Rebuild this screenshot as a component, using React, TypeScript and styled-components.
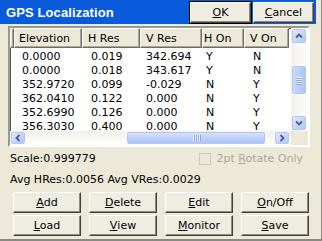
import React from "react";
import styled, { createGlobalStyle } from "styled-components";

const Global = createGlobalStyle`
  html, body { margin: 0; padding: 0; background: #ECE9D8; }
  body { font-family: "DejaVu Sans", "Liberation Sans", sans-serif; font-size: 11px; color: #000; }
  * { box-sizing: border-box; }
`;

const Frame = styled.div`
  width: 322px;
  height: 241px;
  background: #ECE9D8;
  border-right: 1px solid #8C8A7E;
  border-bottom: 2px solid #8C8A7E;
  display: flex;
  flex-direction: column;
  overflow: hidden;
`;

const TitleBar = styled.div`
  width: 316px;
  height: 24px;
  flex: none;
  background: #0A5BDC;
  display: flex;
  align-items: center;
  padding: 0 2px 0 6px;
  gap: 2px;
`;

const Title = styled.div`
  flex: 1;
  color: #fff;
  font-family: "Liberation Sans", Arial, sans-serif;
  font-weight: bold;
  font-size: 13px;
  letter-spacing: 0.1px;
  padding-top: 1px;
`;

const Btn = styled.button<{ $def?: boolean; $w?: number }>`
  width: ${(p) => (p.$w ? `${p.$w}px` : "100%")};
  height: 21px;
  margin: 0;
  padding: 0;
  font-family: "DejaVu Sans", sans-serif;
  font-size: 11px;
  color: #000;
  background: #EFEDE2;
  border: 1px solid;
  border-color: #fff #404040 #404040 #fff;
  box-shadow: inset -1px -1px 0 #8C8A7E;
  outline: ${(p) => (p.$def ? "1px solid #000" : "none")};
  outline-offset: 0;
  display: flex;
  align-items: center;
  justify-content: center;
  u { text-decoration: underline; text-underline-offset: 1px; }
`;

const Body = styled.div`
  display: flex;
  flex-direction: column;
  padding: 2px 0 0 8px;
`;

const ListView = styled.div`
  width: 302px;
  height: 121px;
  border: 2px solid;
  border-color: #9A988C #fff #fff #9A988C;
  box-shadow: inset 1px 1px 0 #5A5850;
  background: #fff;
  display: grid;
  grid-template-columns: 281px 17px;
  grid-template-rows: 103px 14px;
`;

const Table = styled.div`
  overflow: hidden;
  display: flex;
  flex-direction: column;
  padding-top: 0;
`;

const HeadRow = styled.div`
  display: grid;
  grid-template-columns: 4px 68px 58px 62px 42px 45px;
  height: 20px;
  flex: none;
`;

const HeadCell = styled.div<{ $pad: number }>`
  background: #ECE9D8;
  border-top: 1px solid #fff;
  border-left: 1px solid #fff;
  border-right: 1px solid #6E6C62;
  border-bottom: 1px solid #6E6C62;
  box-shadow: inset -1px -1px 0 #ACA899;
  padding-left: ${(p) => p.$pad - 1}px;
  display: flex;
  align-items: center;
  white-space: nowrap;
  font-size: 11px;
`;

const Rows = styled.div`
  padding-top: 2px;
  display: flex;
  flex-direction: column;
`;

const Row = styled.div`
  display: grid;
  grid-template-columns: 72px 58px 62px 42px 45px;
  height: 14px;
  flex: none;
  align-items: center;
`;

const Cell = styled.div<{ $pad: number }>`
  padding-left: ${(p) => p.$pad}px;
  white-space: nowrap;
  line-height: 14px;
`;

const VScroll = styled.div`
  background: linear-gradient(90deg, #F3F1EC, #FEFEFB);
  display: flex;
  flex-direction: column;
  justify-content: space-between;
  padding: 1px 2px 1px 1px;
  position: relative;
`;

const HScroll = styled.div`
  background: linear-gradient(180deg, #F3F1EC, #FEFEFB);
  display: flex;
  align-items: center;
  justify-content: space-between;
  padding: 1px 2px 1px 1px;
  position: relative;
`;

const Corner = styled.div`
  background: #ECE9D8;
`;

const ArrowBtn = styled.div`
  width: 14px;
  height: 14px;
  flex: none;
  border-radius: 2px;
  border: 1px solid #B4C6F2;
  background: linear-gradient(135deg, #E0E8FE 0%, #C4D4FB 60%, #B4C8F6 100%);
  display: flex;
  align-items: center;
  justify-content: center;
`;

const HArrowBtn = styled(ArrowBtn)`
  height: 12px;
`;

const VThumb = styled.div`
  position: absolute;
  left: 1px;
  top: 38px;
  width: 14px;
  height: 28px;
  border-radius: 2px;
  border: 1px solid #B4C6F2;
  background: linear-gradient(90deg, #C9D8FC, #BACDF8 60%, #B0C4F4);
  display: flex;
  flex-direction: column;
  align-items: center;
  justify-content: center;
  gap: 1px;
`;

const HThumb = styled.div`
  position: absolute;
  left: 117px;
  top: 1px;
  width: 138px;
  height: 12px;
  border-radius: 2px;
  border: 1px solid #B4C6F2;
  background: linear-gradient(180deg, #D6E1FD, #BACDF8 60%, #B0C4F4);
  display: flex;
  align-items: center;
  justify-content: center;
  gap: 1px;
`;

const GripH = styled.span`
  width: 6px;
  height: 1px;
  background: #EEF3FF;
  box-shadow: 0 1px 0 #8CA6E2;
`;

const GripV = styled.span`
  width: 1px;
  height: 6px;
  background: #EEF3FF;
  box-shadow: 1px 0 0 #8CA6E2;
`;

const InfoRow = styled.div`
  width: 303px;
  height: 22px;
  display: flex;
  align-items: center;
  justify-content: space-between;
  padding: 1px 8px 0 2px;
`;

const Check = styled.div`
  display: flex;
  align-items: center;
  gap: 5px;
  color: #ACA899;
`;

const Box = styled.span`
  width: 12px;
  height: 12px;
  border: 1px solid #CAC8BB;
  background: #ECE9D8;
`;

const AvgRow = styled.div`
  height: 21px;
  display: flex;
  align-items: center;
  padding-left: 2px;
`;

const ButtonGrid = styled.div`
  display: grid;
  grid-template-columns: repeat(4, 68px);
  column-gap: 8px;
  row-gap: 2px;
  margin-top: 2px;
  padding-left: 5px;
`;

const Chevron = ({ dir }: { dir: "up" | "down" | "left" | "right" }) => {
  const rot = { up: 0, right: 90, down: 180, left: 270 }[dir];
  return (
    <svg width="8" height="8" viewBox="0 0 8 8" style={{ transform: `rotate(${rot}deg)` }}>
      <path d="M1 5.5 L4 2.5 L7 5.5" fill="none" stroke="#4D6185" strokeWidth="1.8" />
    </svg>
  );
};

const cols = [
  { name: "Elevation", hp: 5, dp: 12 },
  { name: "H Res", hp: 6, dp: 9 },
  { name: "V Res", hp: 6, dp: 6 },
  { name: "H On", hp: 2, dp: 4 },
  { name: "V On", hp: 6, dp: 9 },
];

const data = [
  ["0.0000", "0.019", "342.694", "Y", "N"],
  ["0.0000", "0.018", "343.617", "Y", "N"],
  ["352.9720", "0.099", "-0.029", "N", "Y"],
  ["362.0410", "0.122", "0.000", "N", "Y"],
  ["352.6990", "0.126", "0.000", "N", "Y"],
  ["356.3030", "0.400", "0.000", "N", "Y"],
];

export default function App() {
  return (
    <>
      <Global />
      <Frame>
        <TitleBar>
          <Title>GPS Localization</Title>
          <Btn $def $w={61}><u>O</u>K</Btn>
          <Btn $w={61}><u>C</u>ancel</Btn>
        </TitleBar>
        <Body>
          <ListView>
            <Table>
              <HeadRow>
                <HeadCell $pad={0} />
                {cols.map((c) => (
                  <HeadCell key={c.name} $pad={c.hp}>{c.name}</HeadCell>
                ))}
              </HeadRow>
              <Rows>
                {data.map((r, i) => (
                  <Row key={i}>
                    {r.map((v, j) => (
                      <Cell key={j} $pad={cols[j].dp}>{v}</Cell>
                    ))}
                  </Row>
                ))}
              </Rows>
            </Table>
            <VScroll>
              <ArrowBtn><Chevron dir="up" /></ArrowBtn>
              <VThumb><GripH /><GripH /><GripH /><GripH /></VThumb>
              <ArrowBtn><Chevron dir="down" /></ArrowBtn>
            </VScroll>
            <HScroll>
              <HArrowBtn><Chevron dir="left" /></HArrowBtn>
              <HThumb><GripV /><GripV /><GripV /><GripV /></HThumb>
              <HArrowBtn><Chevron dir="right" /></HArrowBtn>
            </HScroll>
            <Corner />
          </ListView>
          <InfoRow>
            <span>Scale:0.999779</span>
            <Check>
              <Box />
              <span>2pt <u>R</u>otate Only</span>
            </Check>
          </InfoRow>
          <AvgRow>Avg HRes:0.0056 Avg VRes:0.0029</AvgRow>
          <ButtonGrid>
            <Btn><u>A</u>dd</Btn>
            <Btn><u>D</u>elete</Btn>
            <Btn><u>E</u>dit</Btn>
            <Btn><u>O</u>n/Off</Btn>
            <Btn><u>L</u>oad</Btn>
            <Btn><u>V</u>iew</Btn>
            <Btn><u>M</u>onitor</Btn>
            <Btn><u>S</u>ave</Btn>
          </ButtonGrid>
        </Body>
      </Frame>
    </>
  );
}
